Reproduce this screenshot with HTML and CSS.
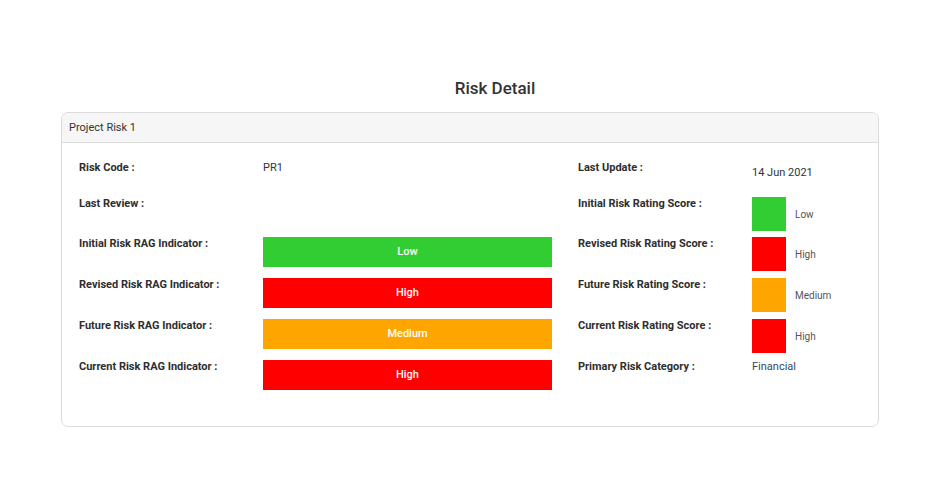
FILE: index.html
```html
<!DOCTYPE html>
<html lang="en">
<head>
  <meta charset="UTF-8" />
  <title>Risk Detail</title>
  <link rel="stylesheet" href="styles.css">
</head>
<body>
  <h1 class="page-title">Risk Detail</h1>

  <div class="card">
    <div class="card-header">Project Risk 1</div>
    <div class="card-body">
      <div class="label">Risk Code :</div>
      <div class="value">PR1</div>
      <div class="label">Last Update :</div>
      <div class="value date">14 Jun 2021</div>

      <div class="label">Last Review :</div>
      <div class="value"></div>
      <div class="label">Initial Risk Rating Score :</div>
      <div class="score"><span class="swatch green"></span><span>Low</span></div>

      <div class="label">Initial Risk RAG Indicator :</div>
      <div class="value"><div class="rag green">Low</div></div>
      <div class="label">Revised Risk Rating Score :</div>
      <div class="score"><span class="swatch red"></span><span>High</span></div>

      <div class="label">Revised Risk RAG Indicator :</div>
      <div class="value"><div class="rag red">High</div></div>
      <div class="label">Future Risk Rating Score :</div>
      <div class="score"><span class="swatch amber"></span><span>Medium</span></div>

      <div class="label">Future Risk RAG Indicator :</div>
      <div class="value"><div class="rag amber">Medium</div></div>
      <div class="label">Current Risk Rating Score :</div>
      <div class="score"><span class="swatch red"></span><span>High</span></div>

      <div class="label">Current Risk RAG Indicator :</div>
      <div class="value"><div class="rag red">High</div></div>
      <div class="label">Primary Risk Category :</div>
      <div class="value category">Financial</div>
    </div>
  </div>
</body>
</html>
```

FILE: styles.css
```css
body {
  font-family: Roboto, 'Liberation Sans', Arial, sans-serif;
  margin: 0;
  background-color: #fff;
  color: #333;
}

.page-title {
  margin: 76px 0 12px;
  padding-left: 42px;
  font-size: 17px;
  line-height: 24px;
  font-weight: 500;
  text-align: center;
  color: #333;
}

.card {
  margin-left: 61px;
  width: 818px;
  box-sizing: border-box;
  border: 1px solid #dcdcdc;
  border-radius: 7px;
  overflow: hidden;
}

.card-header {
  height: 29px;
  line-height: 29px;
  padding-left: 7px;
  font-size: 11px;
  color: #333;
  background-color: #f6f6f6;
  border-bottom: 1px solid #dcdcdc;
}

.card-body {
  display: grid;
  grid-template-columns: 184px 315px 174px 1fr;
  grid-template-rows: 36px 40px 41px 41px 41px 30px;
  padding: 18px 0 36px 17px;
  font-size: 11px;
}

.label {
  font-weight: 700;
  line-height: 14px;
  color: #2e2e2e;
}

.value {
  line-height: 14px;
  color: #333;
}

.value.date {
  padding-top: 5px;
}

.value.category {
  color: #34495e;
}

.rag {
  width: 289px;
  height: 30px;
  line-height: 30px;
  text-align: center;
  color: #fff;
  font-weight: 500;
}

.score {
  display: flex;
  align-items: center;
  gap: 9px;
  height: 34px;
  font-size: 10px;
  color: #555;
}

.swatch {
  width: 34px;
  height: 34px;
}

.green { background-color: #32cd32; }
.red { background-color: #ff0000; }
.amber { background-color: #ffa500; }
```
